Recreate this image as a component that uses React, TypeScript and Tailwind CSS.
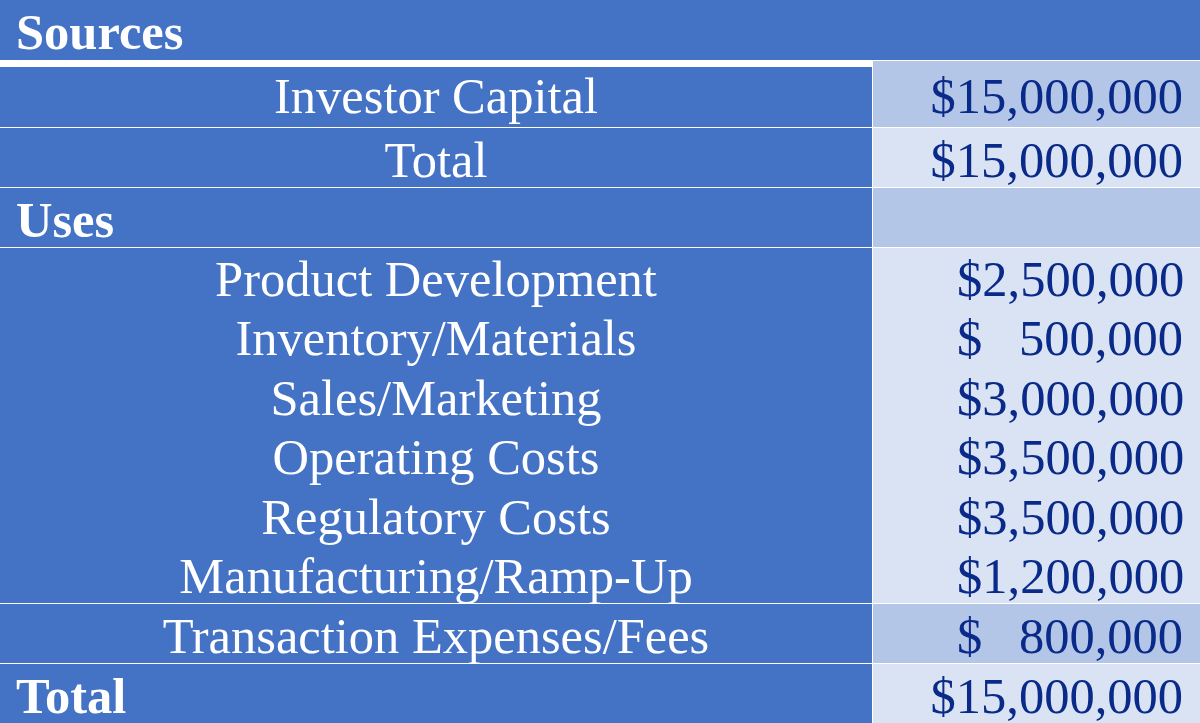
const serif = { fontFamily: '"Liberation Serif", "Times New Roman", serif' };

const uses = [
  { label: 'Product Development', amount: '2,500,000' },
  { label: 'Inventory/Materials', amount: '500,000' },
  { label: 'Sales/Marketing', amount: '3,000,000' },
  { label: 'Operating Costs', amount: '3,500,000' },
  { label: 'Regulatory Costs', amount: '3,500,000' },
  { label: 'Manufacturing/Ramp-Up', amount: '1,200,000' },
];

function Money({ value }: { value: string }) {
  return (
    <span className="ml-auto flex w-[226px] justify-between">
      <span>$</span>
      <span>{value}</span>
    </span>
  );
}

function Row({
  label,
  value,
  shade,
  bold = false,
}: {
  label: string;
  value?: React.ReactNode;
  shade: 'dark' | 'light';
  bold?: boolean;
}) {
  return (
    <div className="flex h-[59px] gap-px">
      <div
        className={`flex w-[872px] bg-[#4472c4] pt-[5px] leading-[54px] text-white ${
          bold ? 'pl-[16px] font-bold' : 'justify-center'
        }`}
      >
        {label}
      </div>
      <div
        className={`flex flex-1 justify-end pr-[17px] pt-[5px] leading-[54px] text-[#0a2a8a] ${
          shade === 'dark' ? 'bg-[#b4c6e7]' : 'bg-[#dae3f3]'
        }`}
      >
        {value}
      </div>
    </div>
  );
}

export default function App() {
  return (
    <div className="flex h-[723px] w-[1200px] flex-col gap-px overflow-hidden bg-white text-[50.5px]" style={serif}>
      <div className="h-[60px] shrink-0 bg-[#4472c4] pl-[16px] pt-[5px] font-bold leading-[54px] text-white">
        Sources
      </div>

      <div className="flex h-[66px] shrink-0 gap-px">
        <div className="flex w-[872px] flex-col">
          <div className="h-[6px] bg-white" />
          <div className="flex flex-1 justify-center bg-[#4472c4] pt-[2px] leading-[54px] text-white">
            Investor Capital
          </div>
        </div>
        <div className="flex flex-1 justify-end bg-[#b4c6e7] pr-[17px] pt-[8px] leading-[54px] text-[#0a2a8a]">
          $15,000,000
        </div>
      </div>

      <Row label="Total" value="$15,000,000" shade="light" />
      <Row label="Uses" shade="dark" bold />

      <div className="flex h-[355px] shrink-0 gap-px overflow-hidden">
        <div className="flex w-[872px] flex-col items-center bg-[#4472c4] pt-[2px] text-white">
          {uses.map((u) => (
            <div key={u.label} className="h-[59.4px] shrink-0 leading-[59px]">
              {u.label}
            </div>
          ))}
        </div>
        <div className="flex flex-1 flex-col bg-[#dae3f3] pr-[17px] pt-[2px] text-[#0a2a8a]">
          {uses.map((u) => (
            <div key={u.label} className="flex h-[59.4px] shrink-0 leading-[59px]">
              <Money value={u.amount} />
            </div>
          ))}
        </div>
      </div>

      <Row label="Transaction Expenses/Fees" value={<Money value="800,000" />} shade="dark" />
      <Row label="Total" value="$15,000,000" shade="light" bold />
    </div>
  );
}
